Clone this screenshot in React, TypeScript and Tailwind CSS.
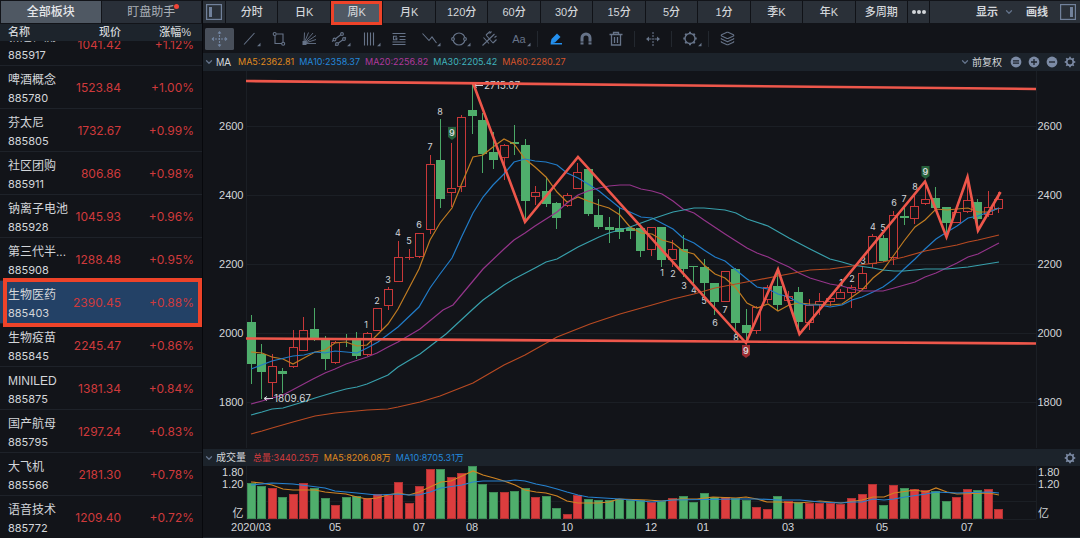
import React from 'react';
import { ChevronDown, Layers } from 'lucide-react';

const sectors = [
  { name: '新冠检测', code: '885917', price: '1041.42', change: '+1.12%' },
  { name: '啤酒概念', code: '885780', price: '1523.84', change: '+1.00%' },
  { name: '芬太尼', code: '885805', price: '1732.67', change: '+0.99%' },
  { name: '社区团购', code: '885911', price: '806.86', change: '+0.98%' },
  { name: '钠离子电池', code: '885928', price: '1045.93', change: '+0.96%' },
  { name: '第三代半...', code: '885908', price: '1288.48', change: '+0.95%' },
  { name: '生物医药', code: '885403', price: '2390.45', change: '+0.88%', selected: true },
  { name: '生物疫苗', code: '885845', price: '2245.47', change: '+0.86%' },
  { name: 'MINILED', code: '885875', price: '1381.34', change: '+0.84%' },
  { name: '国产航母', code: '885795', price: '1297.24', change: '+0.83%' },
  { name: '大飞机', code: '885566', price: '2181.30', change: '+0.78%' },
  { name: '语音技术', code: '885772', price: '1209.40', change: '+0.72%' },
];

const periods = ['分时', '日K', '周K', '月K', '120分', '60分', '30分', '15分', '5分', '1分', '季K', '年K', '多周期'];

// [direction, body top, body bottom, wick top, wick bottom, volume top]
type Candle = ['u' | 'd', number, number, number, number, number];

const candles: Candle[] = [
  ['d', 322, 364, 315, 384, 483],
  ['d', 354, 372, 344, 399, 486],
  ['u', 366, 383, 354, 397, 488],
  ['d', 371, 374, 368, 393, 497],
  ['u', 347, 367, 330, 368, 494],
  ['u', 330, 351, 317, 351, 483],
  ['d', 329, 339, 308, 341, 488],
  ['d', 340, 359, 336, 370, 498],
  ['u', 342, 363, 341, 364, 505],
  ['d', 339, 340, 334, 347, 497],
  ['d', 340, 356, 332, 359, 496],
  ['u', 333, 355, 332, 356, 498],
  ['u', 308, 331, 308, 331, 494],
  ['u', 289, 306, 287, 310, 495],
  ['u', 257, 282, 241, 282, 482],
  ['u', 257, 258, 249, 260, 503],
  ['u', 233, 257, 233, 258, 486],
  ['u', 164, 230, 155, 234, 469],
  ['d', 160, 199, 119, 208, 469],
  ['u', 188, 193, 143, 207, 477],
  ['u', 117, 187, 115, 192, 473],
  ['d', 110, 116, 83, 134, 466],
  ['d', 120, 154, 113, 173, 484],
  ['d', 152, 160, 132, 169, 492],
  ['u', 145, 158, 144, 180, 492],
  ['d', 142, 144, 125, 155, 491],
  ['d', 145, 201, 139, 222, 488],
  ['u', 192, 197, 186, 205, 497],
  ['d', 191, 204, 177, 207, 496],
  ['d', 203, 218, 202, 229, 508],
  ['u', 195, 206, 193, 207, 514],
  ['u', 172, 189, 163, 189, 495],
  ['d', 169, 214, 168, 216, 499],
  ['d', 215, 227, 199, 229, 500],
  ['d', 227, 230, 217, 243, 500],
  ['d', 228, 232, 207, 239, 499],
  ['d', 228, 231, 227, 239, 500],
  ['d', 228, 251, 227, 257, 500],
  ['u', 227, 250, 227, 256, 502],
  ['d', 227, 260, 227, 267, 501],
  ['u', 249, 260, 240, 267, 498],
  ['d', 249, 269, 235, 277, 496],
  ['d', 266, 267, 266, 283, 502],
  ['d', 267, 283, 259, 299, 493],
  ['d', 283, 302, 283, 315, 497],
  ['u', 271, 302, 271, 302, 497],
  ['d', 269, 323, 268, 334, 498],
  ['d', 325, 333, 309, 342, 500],
  ['u', 307, 331, 306, 334, 507],
  ['u', 287, 300, 285, 303, 509],
  ['d', 286, 305, 268, 311, 496],
  ['u', 296, 301, 291, 305, 501],
  ['d', 292, 322, 287, 333, 502],
  ['u', 305, 323, 299, 330, 503],
  ['u', 301, 305, 293, 315, 503],
  ['u', 298, 302, 296, 306, 503],
  ['u', 292, 299, 289, 299, 504],
  ['u', 287, 293, 285, 308, 498],
  ['u', 273, 289, 267, 290, 494],
  ['u', 236, 264, 234, 268, 484],
  ['d', 238, 261, 235, 262, 505],
  ['u', 215, 258, 211, 265, 485],
  ['d', 216, 218, 207, 225, 488],
  ['u', 206, 219, 196, 224, 489],
  ['u', 199, 204, 182, 205, 490],
  ['d', 198, 208, 187, 209, 491],
  ['d', 207, 223, 207, 237, 501],
  ['u', 212, 223, 210, 223, 497],
  ['u', 200, 212, 182, 213, 489],
  ['d', 202, 219, 199, 230, 490],
  ['u', 207, 215, 191, 217, 489],
  ['u', 199, 209, 192, 213, 509],
];

const candleX = (i: number) => Math.floor(251.3 + i * 10.53) + 0.5;

const averages = [
  {
    label: 'MA5:2362.81',
    text: 'text-[#e08a1e]',
    color: '#c07c22',
    points:
      '251,352 262,353 272,357 283,359 293,364 304,358 315,352 325,350 335,343 346,342 357,346 367,345 378,334 388,324 398,309 419,269 430,240 440,223 452,208 462,183 473,157 483,155 493,147 504,139 514,144 525,159 535,167 546,177 557,192 567,202 578,197 588,201 599,205 609,208 620,215 630,227 641,233 652,234 662,240 673,243 683,251 694,254 704,265 715,274 725,278 736,288 747,303 757,308 768,304 778,311 789,305 799,303 810,304 830,305 842,304 852,297 862,290 873,278 883,270 894,255 904,241 915,227 925,220 936,209 947,210 957,209 968,208 978,212 989,212 999,208',
  },
  {
    label: 'MA10:2358.37',
    text: 'text-[#2388dc]',
    color: '#217cc8',
    points:
      '251,369 272,361 293,356 304,355 315,352 325,353 335,351 357,353 367,348 378,342 398,327 419,307 430,288 440,274 452,258 462,236 473,213 483,197 493,185 504,174 514,162 525,159 535,161 546,162 557,165 567,173 578,178 588,184 599,191 620,208 630,212 641,217 652,218 673,229 683,238 694,243 704,250 715,257 725,261 736,270 747,279 757,287 768,289 778,294 789,297 799,303 807,305 820,305 830,307 842,305 852,300 862,297 873,292 883,287 894,279 904,269 915,259 925,249 936,239 947,232 957,226 968,218 978,216 989,212 999,208',
  },
  {
    label: 'MA20:2256.82',
    text: 'text-[#b0389c]',
    color: '#94348a',
    points:
      '251,404 262,401 283,395 313,379 325,373 335,369 346,364 367,357 377,353 388,347 398,342 420,329 443,310 453,305 473,281 483,269 504,249 514,240 525,233 535,226 557,212 567,203 578,195 588,191 599,188 609,186 620,185 630,185 641,189 652,191 662,194 673,201 683,209 694,213 704,220 725,234 736,241 747,248 757,253 768,257 778,262 789,267 799,273 810,278 820,281 830,284 842,286 852,289 862,291 883,291 894,288 915,282 925,277 936,273 957,263 968,257 978,254 999,243',
  },
  {
    label: 'MA30:2205.42',
    text: 'text-[#3fb3bd]',
    color: '#38a0ac',
    points:
      '251,415 262,412 272,409 283,408 303,402 315,398 335,392 346,389 357,387 367,384 388,375 398,367 408,361 420,354 446,334 473,309 483,300 504,285 514,279 535,268 546,262 557,259 578,247 599,237 609,233 630,227 652,219 673,212 694,208 704,208 725,210 736,213 747,219 768,226 789,238 810,249 830,259 842,262 852,265 873,268 883,270 894,271 904,271 925,269 947,269 968,267 999,262',
  },
  {
    label: 'MA60:2280.27',
    text: 'text-[#d5532a]',
    color: '#b84a22',
    points:
      '251,434 262,431 272,428 293,422 315,416 335,413 367,410 388,409 398,407 420,402 440,396 473,383 504,365 525,355 557,337 590,324 620,314 652,305 673,299 694,294 715,288 736,284 757,280 778,276 810,270 830,269 852,266 883,262 904,257 925,251 957,245 968,242 978,240 999,235',
  },
];

const volumeMa5 =
  '251,482 262,483 272,485 283,489 293,490 315,490 325,492 335,493 346,494 357,497 367,499 377,498 388,495 398,493 409,495 419,492 430,487 441,482 451,481 462,476 473,471 483,475 494,478 504,481 515,485 525,490 536,492 546,493 557,496 567,501 578,503 598,503 609,502 619,499 647,500 662,501 680,499 697,499 713,497 736,498 746,497 757,499 767,502 780,502 799,503 820,501 841,503 862,500 873,497 884,497 894,493 915,490 926,492 936,488 947,492 957,494 989,493 999,495';
const volumeMa10 =
  '251,485 272,483 293,484 325,488 335,491 357,493 377,495 398,494 409,495 419,495 430,492 441,488 462,485 473,482 483,481 507,481 515,480 525,481 536,484 546,486 557,489 567,492 578,495 588,497 620,499 652,502 673,500 736,499 757,499 780,500 800,500 820,502 841,503 852,502 862,502 873,499 884,500 894,499 905,497 926,494 936,492 957,493 989,492 999,493';

// sequence counts printed above and below the candles
const counts: [string, number, number][] = [
  ['1', 366, 325], ['2', 377, 301], ['3', 388, 280], ['4', 398, 233], ['5', 409, 241],
  ['6', 419, 225], ['7', 430, 147], ['8', 440, 112],
  ['1', 662, 273], ['2', 673, 274], ['3', 684, 286], ['4', 694, 290], ['5', 704, 301],
  ['6', 715, 323], ['7', 725, 310], ['8', 736, 338],
  ['1', 841, 283], ['2', 852, 279], ['3', 863, 261], ['4', 873, 227], ['5', 883, 228],
  ['6', 894, 203], ['7', 904, 199], ['8', 915, 187],
];

const priceTicks: [string, number][] = [
  ['2600', 126], ['2400', 195], ['2200', 264], ['2000', 333], ['1800', 402],
];
const volumeTicks: [string, number][] = [['1.80', 472], ['1.20', 484], ['亿', 513]];
const dateTicks: [string, number][] = [
  ['2020/03', 251], ['05', 335], ['07', 419], ['08', 472], ['10', 567],
  ['12', 651], ['01', 703], ['03', 788], ['05', 882], ['07', 967],
];

const gearTeeth = [0, 45, 90, 135, 180, 225, 270, 315];

function Gear() {
  return (
    <svg viewBox="0 0 16 16" className="size-3" fill="none" stroke="currentColor" strokeWidth="2.2">
      <circle cx="8" cy="8" r="4.4" />
      {gearTeeth.map((a) => (
        <path key={a} d="M8 1v2.4" transform={`rotate(${a} 8 8)`} />
      ))}
    </svg>
  );
}

function Chevron() {
  return <ChevronDown size={10} strokeWidth={3} className="text-[#64738b]" />;
}

function Tool({ label, menu, active, children }: { label: string; menu?: boolean; active?: boolean; children: React.ReactNode }) {
  return (
    <button
      aria-label={label}
      className={`flex h-[22px] w-[30px] items-center justify-center ${active ? 'text-[#7386a2]' : 'text-[#667388]'}`}
    >
      <svg viewBox="0 0 30 22" className="h-[22px] w-[30px]" fill="none" stroke="currentColor" strokeWidth="1.1">
        {active && <rect x="1" width="29" height="22" rx="1.5" fill="#484f5a" stroke="none" />}
        {children}
        {menu && <path d="M26.5 14.8v3.4h-3.4z" fill="currentColor" stroke="none" />}
      </svg>
    </button>
  );
}

function Separator() {
  return (
    <div className="flex w-[7px] justify-center">
      <div className="h-4 w-px bg-[#23282f]" />
    </div>
  );
}

function DrawingTools() {
  return (
    <div className="flex h-[29px] shrink-0 items-center pt-0.5 pl-px">
      <Tool label="十字光标" active>
        <path d="M15.500 4v14M8 11h15" strokeDasharray="2 1" />
        <path d="M14 5.500L15.500 3.800l1.500 1.700M14 16.500l1.500 1.700 1.500-1.700M10 9.500L8.300 11l1.700 1.500M21 9.500l1.700 1.500-1.700 1.500" />
      </Tool>
      <Tool label="线段" menu>
        <path d="M10 16.500L20.500 5" />
      </Tool>
      <Tool label="矩形">
        <path d="M11 7.500v8h7M12.500 6h6.500v8.500" />
        <circle cx="10.700" cy="6" r="1.500" />
        <circle cx="19.200" cy="15.700" r="1.500" />
      </Tool>
      <Tool label="扇形线">
        <path d="M10 15.500L10.500 4.500M10 15.500L14.500 4.500M10 15.500L19 5M10 15.500L22 7.500M10 15.500L22 11.500M10 15.500H22" strokeWidth=".9" />
        <path d="M8.500 13h4v4h-4z" fill="currentColor" stroke="none" />
      </Tool>
      <Tool label="平行通道" menu>
        <path d="M8 13.500L19 5M11 17.500L22 9.500" />
        <circle cx="10.500" cy="11.500" r="1.400" fill="#13151a" />
        <circle cx="18" cy="6" r="1.400" fill="#13151a" />
        <circle cx="13" cy="16" r="1.400" fill="#13151a" />
        <circle cx="20" cy="11" r="1.400" fill="#13151a" />
      </Tool>
      <Tool label="周期线" menu>
        <path d="M10.500 4.500v13M13.500 4.500v13M16.500 4.500v13M19.500 4.500v13" />
      </Tool>
      <Tool label="黄金分割">
        <path d="M8.500 5.500h13M15.500 8.500h6M15.500 11.500h6M8.500 14h13M8.500 16.500h13" />
        <path d="M13 8.300H9.500v3.400h3.300v-1.600h-1.500" />
      </Tool>
      <Tool label="波浪线" menu>
        <path d="M8.500 5.500L15 12.500L18 9L22.500 15" />
      </Tool>
      <Tool label="圆形" menu>
        <circle cx="15" cy="11" r="6" />
        <circle cx="9" cy="11" r="1.400" fill="#13151a" />
        <circle cx="21" cy="11" r="1.400" fill="#13151a" />
      </Tool>
      <Tool label="安德鲁音叉">
        <path d="M8.500 17.500L20.500 6M12 7l7 8M12 7l4-3.500M19 15l3.500-3.500M9.500 9.500l5.500 6" />
        <path d="M15.500 5.500l2-2M20.500 9.500l2-1.500" />
      </Tool>
      <Tool label="文字" menu>
        <text x="15" y="15" textAnchor="middle" fontSize="11" fill="currentColor" stroke="none">Aa</text>
      </Tool>
      <Separator />
      <Tool label="画笔">
        <g fill="#2490ee" stroke="none">
          <path d="M9.500 15.500l1-4.500 5.500-5.500 3.500 3.500-5.500 5.500z" />
          <path d="M10 15h11v1.500H9.500z" />
        </g>
      </Tool>
      <Tool label="磁吸">
        <path d="M11 16.500V10a4 4 0 0 1 8 0v6.500" strokeWidth="3" />
        <path d="M9 14h4M17 14h4" stroke="#13151a" strokeWidth=".8" />
      </Tool>
      <Tool label="删除">
        <path d="M8.500 6.500h13M12.500 6.500v-2h5v2M10.500 7v10h9V7M13.500 9v6M16.500 9v6" strokeWidth="1.300" />
      </Tool>
      <Separator />
      <Tool label="展开间距">
        <path d="M15 4v14" strokeDasharray="2 1" />
        <path d="M9 11h4.500M16.500 11H21" />
        <path d="M11 8.500v5L8 11zM19 8.500v5l3-2.500z" fill="currentColor" stroke="none" />
      </Tool>
      <Separator />
      <Tool label="设置" menu>
        <circle cx="15" cy="10.500" r="5" strokeWidth="1.300" />
        {gearTeeth.map((a) => (
          <path key={a} d="M15 3.800v2" strokeWidth="2" transform={`rotate(${a} 15 10.500)`} />
        ))}
      </Tool>
      <Separator />
      <button aria-label="图层" className="flex h-[22px] w-[30px] items-center justify-center text-[#667388]">
        <Layers size={15} strokeWidth={1.8} />
      </button>
    </div>
  );
}

function PanelLayoutIcon({ side }: { side: 'left' | 'right' }) {
  return (
    <svg viewBox="0 0 16 16" className="size-4" fill="none" stroke="#71819b">
      <rect x=".6" y=".6" width="14.800" height="14.800" strokeWidth="1.200" />
      <rect x={side === 'left' ? 3 : 10} y="3" width="3" height="10" fill="#71819b" stroke="none" />
    </svg>
  );
}

function RoundButton({ label, d }: { label: string; d: string }) {
  return (
    <button aria-label={label}>
      <svg viewBox="0 0 12 12" className="size-3">
        <circle cx="6" cy="6" r="5.400" fill="#7c8ba5" />
        <path d={d} stroke="#1c232b" strokeWidth="1.300" />
      </svg>
    </button>
  );
}

function CountBadge({ x, y, color }: { x: number; y: number; color: string }) {
  return (
    <g>
      <path d={`M${x - 4} ${y - 6}h8v10l-4 3-4-3z`} fill={color} />
      <text x={x} y={y + 3} textAnchor="middle" fontSize="9" fontWeight="600" className="font-['Inter']">9</text>
    </g>
  );
}

function PriceChart() {
  return (
    <svg viewBox="203 71 877 377" className="block w-full" fill="#d3d6da">
      <path d="M246 126.500h790M246 195.500h790M246 264.500h790M246 333.500h790M246 402.500h790M246.500 71v377M1036.500 71v377" stroke="#1b1f25" />
      {candles.map(([dir, top, bottom, high, low], i) => {
        const x = candleX(i);
        return dir === 'd' ? (
          <g key={i} stroke="#4aa866" fill="#4fae6c">
            <path d={`M${x} ${high}V${low}`} />
            <rect x={x - 4.5} y={top} width="9" height={bottom - top} stroke="none" />
          </g>
        ) : (
          <g key={i} stroke="#c83839" fill="none">
            <path d={`M${x} ${high}V${top}M${x} ${bottom}V${low}`} />
            {bottom - top > 1 ? (
              <rect x={x - 4} y={top + 0.5} width="8" height={bottom - top - 1} />
            ) : (
              <path d={`M${x - 4.5} ${top + 0.5}h9`} />
            )}
          </g>
        );
      })}
      {averages.map((ma) => (
        <polyline key={ma.label} points={ma.points} fill="none" stroke={ma.color} strokeWidth="1.200" />
      ))}
      <g fontSize="9" className="font-['Inter']">
        {counts.map(([n, x, y]) => (
          <text key={x} x={x} y={y + 3} textAnchor="middle">{n}</text>
        ))}
      </g>
      <CountBadge x={452} y={133} color="#27623c" />
      <CountBadge x={925.5} y={172} color="#27623c" />
      <path d="M474 85.500h9M477 83.500l-3 2 3 2M264 398.500h9M267 396.500l-3 2 3 2" stroke="#d3d6da" fill="none" />
      <g fontSize="10" className="font-['Inter']">
        <text x="484" y="89">2715.07</text>
        <text x="274" y="402">1809.67</text>
      </g>
      {/* trend lines */}
      <g fill="none" stroke="#ee574b" strokeWidth="2.600">
        <path d="M246 81L1036 89M246 338.500L1036 343.500" />
        <path d="M473 83L525 222L578 157L746 343L778 269.500L799.500 334L925 181.500L946.500 237L967.500 177L978 230.500L1000.500 192" />
      </g>
      <CountBadge x={746} y={351} color="#9c2c31" />
      <g fontSize="11">
        {priceTicks.map(([t, y]) => (
          <React.Fragment key={t}>
            <text x="243.500" y={y + 4} textAnchor="end">{t}</text>
            <text x="1037.500" y={y + 4}>{t}</text>
          </React.Fragment>
        ))}
      </g>
    </svg>
  );
}

function VolumeChart() {
  return (
    <svg viewBox="203 466 877 71" className="block w-full" fontSize="11" fill="#d3d6da">
      <path d="M246 484.500h790M246 501.500h790M246 519.500h790M246.500 466v53M1036.500 466v53" stroke="#1b1f25" />
      {candles.map(([dir, , , , , top], i) => (
        <rect
          key={i}
          x={candleX(i) - 4}
          y={top + 0.5}
          width="8"
          height={518 - top}
          fill={dir === 'u' ? '#dc3d3e' : '#4fae6c'}
          stroke={dir === 'u' ? '#b03233' : '#3f8d58'}
        />
      ))}
      <polyline points={volumeMa5} fill="none" stroke="#d08422" strokeWidth="1.200" />
      <polyline points={volumeMa10} fill="none" stroke="#2682d0" strokeWidth="1.200" />
      {volumeTicks.map(([t, y]) => (
        <React.Fragment key={t}>
          <text x="243.500" y={y + 4} textAnchor="end">{t}</text>
          <text x="1038" y={y + 4}>{t}</text>
        </React.Fragment>
      ))}
      {dateTicks.map(([t, x]) => (
        <text key={x} x={x} y="531" textAnchor="middle">{t}</text>
      ))}
    </svg>
  );
}

function Sidebar() {
  return (
    <aside className="w-[203px] shrink-0 overflow-hidden border-r border-[#07080c] pt-px">
      <div className="mb-px flex h-[22px] gap-px pr-px pl-px text-[12px]">
        <button className="flex-1 bg-[#4f5863] font-medium text-[#e4e6e9]">全部板块</button>
        <button className="relative flex-1 bg-[#292f38] text-[#a9afb7]">
          盯盘助手
          <span className="absolute top-[3px] right-[22px] size-[5px] rounded-full bg-[#f04437]" />
        </button>
      </div>
      <table className="block">
        <thead className="relative z-10 block bg-[#1d242c] text-[11px] leading-[17px] text-[#d3d6da]">
          <tr className="grid h-[17px] grid-cols-[57px_56px_1fr] pr-[11px] pl-2 *:font-medium">
            <th className="text-left">名称</th>
            <th className="text-right">现价</th>
            <th className="text-right">涨幅%</th>
          </tr>
        </thead>
        <tbody className="-mt-[18px] block">
          {sectors.map((s) => (
            <tr
              key={s.code}
              className={`relative grid h-[43px] grid-cols-[57px_56px_1fr] items-center border-b border-[#1e2229] pr-2 pl-2 text-[12px] ${s.selected ? 'z-10 bg-[#234166]' : ''}`}
            >
              <td className="pt-1 leading-[18px] whitespace-nowrap text-[#d3d6da]">
                {s.name}
                <div className="font-['Inter'] text-[11px]">{s.code}</div>
              </td>
              <td className="pt-0.5 text-right font-['Inter'] text-[#cf3a3c]">{s.price}</td>
              <td className="pt-0.5 text-right font-['Inter'] text-[#cf3a3c]">
                {s.change}
                {s.selected && <span className="absolute -top-[3px] right-0 -bottom-[4px] left-[3px] border-4 border-[#ee4329]" />}
              </td>
            </tr>
          ))}
        </tbody>
      </table>
    </aside>
  );
}

export default function App() {
  return (
    <div className="flex h-screen overflow-hidden bg-[#121419] font-['Liberation_Sans','Noto_Sans_CJK_SC',sans-serif] text-[#d3d6da]">
      <Sidebar />
      <main className="flex min-w-0 flex-1 flex-col pt-px">
        {/* Period tabs */}
        <div className="flex h-[22px] shrink-0 bg-[#2a3038] text-[11px] font-medium">
          <button aria-label="左侧面板" className="flex w-[23px] items-center justify-center border-r border-[#101217]">
            <PanelLayoutIcon side="left" />
          </button>
          <nav className="flex flex-1">
            {periods.map((p) => (
              <button
                key={p}
                className={`relative flex-1 border-r border-[#101217] ${p === '周K' ? 'bg-[#505964]' : ''}`}
              >
                {p}
                {p === '周K' && <span className="absolute inset-x-0 top-0 -bottom-[2px] border-[3px] border-[#ee4329]" />}
              </button>
            ))}
          </nav>
          <button aria-label="更多" className="flex w-[22px] items-center justify-center gap-px border-r border-[#101217]">
            <span className="size-1 rounded-full bg-[#d3d6da]" />
            <span className="size-1 rounded-full bg-[#d3d6da]" />
            <span className="size-1 rounded-full bg-[#d3d6da]" />
          </button>
          <div className="flex w-[150px] items-center justify-end pr-1 font-bold">
            <button className="flex items-center gap-1.5">
              显示
              <Chevron />
            </button>
            <button className="mr-3 ml-3">画线</button>
            <button aria-label="右侧面板">
              <PanelLayoutIcon side="right" />
            </button>
          </div>
        </div>

        <DrawingTools />

        <section className="mt-px shrink-0">
          <div className="flex h-[18px] items-center justify-between bg-[#1c232b] pr-1 pl-px text-[10px]">
            <div className="flex items-center gap-[5px]">
              <button className="mr-0.5 flex items-center gap-0.5">
                <Chevron />
                MA
              </button>
              {averages.map((ma) => (
                <span key={ma.label} className={`font-['Inter'] text-[9px] ${ma.text}`}>{ma.label}</span>
              ))}
            </div>
            <div className="flex items-center gap-[6px] text-[#7c8ba5]">
              <button className="mr-0.5 flex items-center gap-0.5 text-[#d3d6da]">
                <Chevron />
                前复权
              </button>
              <RoundButton label="重置" d="M3 4.800h6M3 7.200h6" />
              <RoundButton label="放大" d="M3 6h6M6 3v6" />
              <RoundButton label="缩小" d="M3 6h6" />
              <button aria-label="指标设置"><Gear /></button>
            </div>
          </div>
          <PriceChart />
        </section>

        <section className="mt-px shrink-0">
          <div className="flex h-[17px] items-center justify-between bg-[#1c232b] pr-1 pl-px text-[10px]">
            <div className="flex items-center gap-[5px]">
              <button className="mr-0.5 flex items-center gap-0.5">
                <Chevron />
                成交量
              </button>
              <span className="font-['Inter','Noto_Sans_CJK_SC'] text-[9px] text-[#d73c3e]">总量:3440.25万</span>
              <span className="font-['Inter','Noto_Sans_CJK_SC'] text-[9px] text-[#e08a1e]">MA5:8206.08万</span>
              <span className="font-['Inter','Noto_Sans_CJK_SC'] text-[9px] text-[#2388dc]">MA10:8705.31万</span>
            </div>
            <button aria-label="成交量设置" className="text-[#7c8ba5]"><Gear /></button>
          </div>
          <VolumeChart />
        </section>
        <div className="flex-1 bg-[#20262d]" />
      </main>
    </div>
  );
}
